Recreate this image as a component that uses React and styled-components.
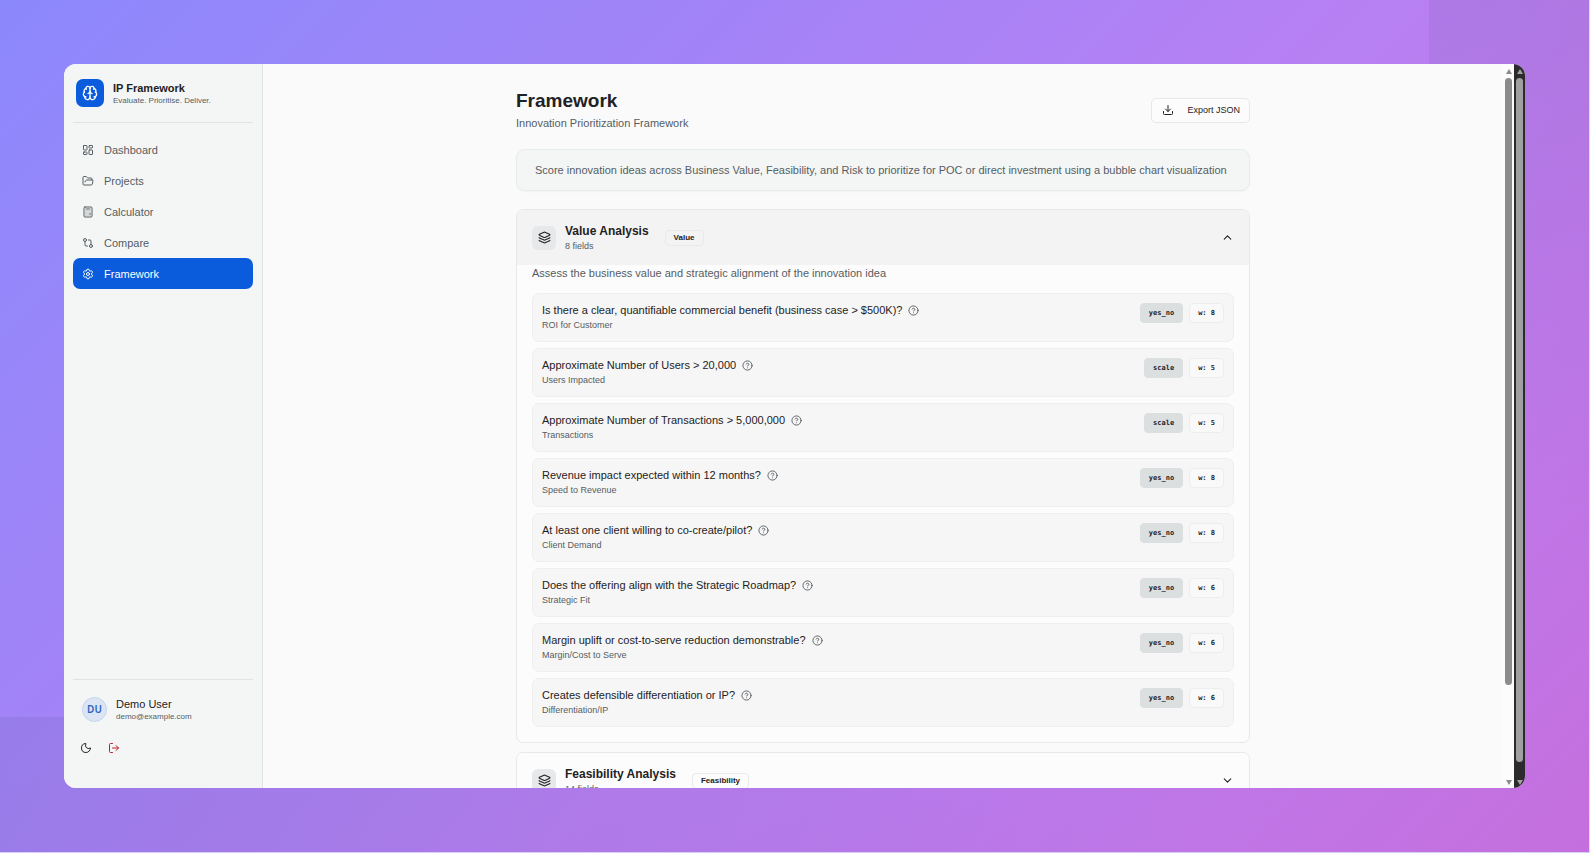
import React, { useState } from "react";
import styled, { createGlobalStyle } from "styled-components";
import {
  Brain,
  LayoutDashboard,
  FolderOpen,
  Calculator,
  GitCompare,
  Settings,
  Moon,
  LogOut,
  Download,
  Layers,
  ChevronUp,
  ChevronDown,
  CircleHelp,
} from "lucide-react";

const GlobalStyle = createGlobalStyle`
  * {
    box-sizing: border-box;
  }

  body {
    margin: 0;
    font-family: "Liberation Sans", Arial, sans-serif;
    color: #1f2223;
  }

  button {
    font-family: inherit;
    color: inherit;
    cursor: pointer;
  }

  h1, h2, p, ul {
    margin: 0;
    padding: 0;
  }
`;

const Backdrop = styled.div`
  position: relative;
  height: 100vh;
  padding: 64px;
  overflow: hidden;
  border-right: 1px solid #e6d4f8;
  border-bottom: 1px solid #d8ccf6;
  background: linear-gradient(135deg, #8b88fc 0%, #b780f3 57%, #c56fde 100%);
`;

const Shade = styled.div`
  position: absolute;
  ${(props) =>
    props.$corner === "top"
      ? `
    top: 0;
    right: 0;
    width: 160px;
    height: 60%;
    background: linear-gradient(to bottom, rgba(120, 90, 160, 0.16), rgba(120, 90, 160, 0));
  `
      : `
    bottom: 0;
    left: 0;
    width: 75%;
    height: 135px;
    background: linear-gradient(to right, rgba(100, 90, 170, 0.18), rgba(120, 90, 170, 0.14) 50%, rgba(120, 90, 160, 0));
  `}
`;

const Window = styled.div`
  position: relative;
  display: flex;
  height: 100%;
  border-radius: 12px;
  overflow: hidden;
  background: #fafafa;
`;

const Sidebar = styled.aside`
  display: flex;
  flex-direction: column;
  flex: none;
  width: 199px;
  padding: 0 9px;
  background: #f4f6f6;
  border-right: 1px solid #dfe3e4;
`;

const Brand = styled.div`
  display: flex;
  align-items: center;
  gap: 9px;
  height: 59px;
  padding-left: 3px;
  border-bottom: 1px solid #dfe3e4;
`;

const Logo = styled.div`
  display: flex;
  align-items: center;
  justify-content: center;
  width: 28px;
  height: 28px;
  border-radius: 7px;
  background: #0b5bdd;
  color: #fff;
`;

const BrandName = styled.p`
  padding-top: 2px;
  font-size: 11px;
  line-height: 14px;
  font-weight: bold;
`;

const Small = styled.p`
  font-size: 8px;
  line-height: 12px;
  color: #565d62;
`;

const Nav = styled.nav`
  flex: 1;
  padding-top: 11px;
`;

const NavItem = styled.a`
  display: flex;
  align-items: center;
  gap: 10px;
  height: 31px;
  padding-left: 9px;
  border-radius: 7px;
  font-size: 11px;
  text-decoration: none;
  color: ${(props) => (props.$active ? "#fff" : "#565d62")};
  background: ${(props) => (props.$active ? "#0b5bdd" : "transparent")};
`;

const Account = styled.div`
  height: 109px;
  border-top: 1px solid #dfe3e4;
`;

const User = styled.div`
  display: flex;
  align-items: center;
  gap: 9px;
  padding: 15px 9px 0;
`;

const Avatar = styled.div`
  display: flex;
  align-items: center;
  justify-content: center;
  width: 25px;
  height: 25px;
  border: 1px solid #c5d5ee;
  border-radius: 50%;
  background: #dce5f3;
  color: #2c66bd;
  font-family: "Noto Sans", sans-serif;
  font-size: 10px;
  font-weight: 600;
`;

const UserName = styled.p`
  padding-top: 2px;
  font-size: 11px;
  line-height: 14px;
`;

const Actions = styled.div`
  display: flex;
  gap: 3px;
  padding-top: 12px;
`;

const IconButton = styled.button`
  display: flex;
  align-items: center;
  justify-content: center;
  width: 25px;
  height: 25px;
  padding: 0;
  border: 0;
  background: transparent;
  color: ${(props) => (props.$danger ? "#bd2028" : "#1f2223")};
`;

const Main = styled.main`
  flex: 1;
  min-width: 0;
  overflow: hidden;
  padding: 25px 24px 0;
`;

const Content = styled.div`
  max-width: 734px;
  margin: 0 auto;
`;

const Header = styled.header`
  display: flex;
  align-items: center;
  justify-content: space-between;
  margin-bottom: 18px;
`;

const Title = styled.h1`
  font-size: 19px;
  line-height: 24px;
`;

const Subtitle = styled.p`
  padding-top: 2px;
  font-size: 11px;
  line-height: 16px;
  color: #565d62;
`;

const ExportButton = styled.button`
  display: flex;
  align-items: center;
  gap: 13px;
  height: 25px;
  padding: 0 9px 0 10px;
  border: 1px solid #e6e8e9;
  border-radius: 5px;
  background: #fcfcfc;
  font-size: 9px;
`;

const Intro = styled.p`
  margin-bottom: 18px;
  padding: 12px 18px;
  border: 1px solid #e8ecec;
  border-radius: 9px;
  background: #f4f6f6;
  box-shadow: 0 1px 2px rgba(0, 0, 0, 0.04);
  font-size: 11px;
  line-height: 16px;
  color: #565d62;
`;

const Section = styled.section`
  margin-bottom: 9px;
  border: 1px solid #e6e8e9;
  border-radius: 7px;
  overflow: hidden;
  background: #fcfcfc;
`;

const SectionHeader = styled.button`
  display: flex;
  align-items: center;
  width: 100%;
  height: 55px;
  padding: 0 15px;
  border: 0;
  text-align: left;
  background: ${(props) => (props.$open ? "#f3f3f3" : "#fcfcfc")};
`;

const SectionIcon = styled.span`
  display: flex;
  align-items: center;
  justify-content: center;
  width: 24px;
  height: 24px;
  margin-right: 9px;
  border-radius: 6px;
  background: #e6e8e9;
`;

const SectionTitle = styled.h2`
  font-size: 12px;
  line-height: 16px;
`;

const Caption = styled.p`
  font-size: 9px;
  line-height: 14px;
  color: #565d62;
`;

const Category = styled.span`
  margin: 0 auto 0 16px;
  padding: 2px 8px;
  border: 1px solid #e8eaea;
  border-radius: 4px;
  font-size: 8px;
  line-height: 10px;
  font-weight: bold;
`;

const SectionBody = styled.div`
  padding: 0 15px 15px;
`;

const Description = styled.p`
  margin-bottom: 12px;
  font-size: 11px;
  line-height: 16px;
  color: #565d62;
`;

const FieldList = styled.ul`
  display: grid;
  gap: 6px;
  list-style: none;
`;

const Field = styled.li`
  display: flex;
  justify-content: space-between;
  height: 49px;
  padding: 9px;
  border: 1px solid #efefef;
  border-radius: 7px;
  background: #f6f6f6;
`;

const Question = styled.p`
  display: flex;
  align-items: center;
  gap: 6px;
  font-size: 11px;
  line-height: 15px;
`;

const HelpButton = styled.button`
  display: flex;
  padding: 0;
  border: 0;
  background: transparent;
  color: #565d62;
`;

const Tags = styled.div`
  display: flex;
  gap: 6px;
`;

const Tag = styled.span`
  height: 20px;
  padding: 0 8px;
  border: 1px solid ${(props) => (props.$filled ? "#dcdfe0" : "#eceeee")};
  border-radius: 4px;
  background: ${(props) => (props.$filled ? "#dcdfe0" : "#f9f9f9")};
  font-family: "DejaVu Sans Mono", monospace;
  font-size: 7px;
  line-height: 18px;
  font-weight: bold;
  white-space: pre;
`;

const Scrollbar = styled.div`
  display: flex;
  flex-direction: column;
  align-items: center;
  flex: none;
  width: 11px;
  padding: 5px 0 3px;
  color: ${(props) => (props.$dark ? "#a0a0a0" : "#8b8b8b")};
  background: ${(props) => (props.$dark ? "#2c2a2c" : "#fcfcfc")};
`;

const Track = styled.div`
  flex: 1;
  width: 7px;
  margin: 4px 0;
`;

const Thumb = styled.div`
  height: ${(props) => props.$size};
  border-radius: 4px;
  background: currentColor;
`;

const Arrow = styled.span`
  width: 0;
  height: 0;
  border: 3px solid transparent;
  border-top: ${(props) => (props.$down ? "5px solid currentColor" : "0")};
  border-bottom: ${(props) => (props.$down ? "0" : "5px solid currentColor")};
`;

const navItems = [
  { label: "Dashboard", icon: LayoutDashboard },
  { label: "Projects", icon: FolderOpen },
  { label: "Calculator", icon: Calculator },
  { label: "Compare", icon: GitCompare },
  { label: "Framework", icon: Settings },
];

const valueFields = [
  { question: "Is there a clear, quantifiable commercial benefit (business case > $500K)?", name: "ROI for Customer", type: "yes_no", weight: 8 },
  { question: "Approximate Number of Users > 20,000", name: "Users Impacted", type: "scale", weight: 5 },
  { question: "Approximate Number of Transactions > 5,000,000", name: "Transactions", type: "scale", weight: 5 },
  { question: "Revenue impact expected within 12 months?", name: "Speed to Revenue", type: "yes_no", weight: 8 },
  { question: "At least one client willing to co-create/pilot?", name: "Client Demand", type: "yes_no", weight: 8 },
  { question: "Does the offering align with the Strategic Roadmap?", name: "Strategic Fit", type: "yes_no", weight: 6 },
  { question: "Margin uplift or cost-to-serve reduction demonstrable?", name: "Margin/Cost to Serve", type: "yes_no", weight: 6 },
  { question: "Creates defensible differentiation or IP?", name: "Differentiation/IP", type: "yes_no", weight: 6 },
];

const FieldRow = ({ item }) => (
  <Field>
    <div>
      <Question>
        {item.question}
        <HelpButton aria-label="Help">
          <CircleHelp size={11} />
        </HelpButton>
      </Question>
      <Caption>{item.name}</Caption>
    </div>
    <Tags>
      <Tag $filled>{item.type}</Tag>
      <Tag>{`w: ${item.weight}`}</Tag>
    </Tags>
  </Field>
);

const AnalysisSection = ({ title, count, category, open, onToggle, children }) => (
  <Section>
    <SectionHeader $open={open} aria-expanded={open} onClick={onToggle}>
      <SectionIcon>
        <Layers size={13} />
      </SectionIcon>
      <div>
        <SectionTitle>{title}</SectionTitle>
        <Caption>{count} fields</Caption>
      </div>
      <Category>{category}</Category>
      {open ? <ChevronUp size={13} /> : <ChevronDown size={13} />}
    </SectionHeader>
    {open && children}
  </Section>
);

const ScrollRail = ({ dark, size }) => (
  <Scrollbar $dark={dark}>
    <Arrow />
    <Track>
      <Thumb $size={size} />
    </Track>
    <Arrow $down />
  </Scrollbar>
);

const App = () => {
  const [open, setOpen] = useState(true);

  return (
    <>
      <GlobalStyle />
      <Backdrop>
        <Shade $corner="top" />
        <Shade $corner="bottom" />
        <Window>
          <Sidebar>
            <Brand>
              <Logo>
                <Brain size={16} />
              </Logo>
              <div>
                <BrandName>IP Framework</BrandName>
                <Small>Evaluate. Prioritise. Deliver.</Small>
              </div>
            </Brand>
            <Nav>
              {navItems.map(({ label, icon: Icon }) => (
                <NavItem key={label} href="#" $active={label === "Framework"}>
                  <Icon size={12} />
                  {label}
                </NavItem>
              ))}
            </Nav>
            <Account>
              <User>
                <Avatar>DU</Avatar>
                <div>
                  <UserName>Demo User</UserName>
                  <Small>demo@example.com</Small>
                </div>
              </User>
              <Actions>
                <IconButton aria-label="Dark mode">
                  <Moon size={12} />
                </IconButton>
                <IconButton $danger aria-label="Log out">
                  <LogOut size={12} />
                </IconButton>
              </Actions>
            </Account>
          </Sidebar>

          <Main>
            <Content>
              <Header>
                <div>
                  <Title>Framework</Title>
                  <Subtitle>Innovation Prioritization Framework</Subtitle>
                </div>
                <ExportButton>
                  <Download size={12} />
                  Export JSON
                </ExportButton>
              </Header>
              <Intro>
                Score innovation ideas across Business Value, Feasibility, and Risk to prioritize for POC or direct investment using a bubble chart visualization
              </Intro>
              <AnalysisSection title="Value Analysis" count={8} category="Value" open={open} onToggle={() => setOpen(!open)}>
                <SectionBody>
                  <Description>Assess the business value and strategic alignment of the innovation idea</Description>
                  <FieldList>
                    {valueFields.map((item) => (
                      <FieldRow key={item.name} item={item} />
                    ))}
                  </FieldList>
                </SectionBody>
              </AnalysisSection>
              <AnalysisSection title="Feasibility Analysis" count={14} category="Feasibility" open={false} />
            </Content>
          </Main>

          <ScrollRail size="87%" />
          <ScrollRail dark size="98%" />
        </Window>
      </Backdrop>
    </>
  );
};

export default App;
